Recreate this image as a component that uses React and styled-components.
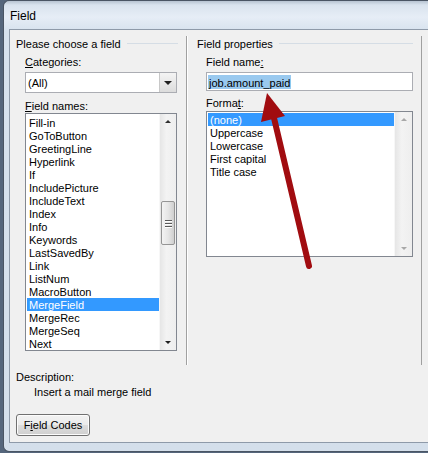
import styled, { createGlobalStyle } from 'styled-components';

const GlobalStyle = createGlobalStyle`
  html, body {
    margin: 0;
    padding: 0;
    background: #55667c;
    font-family: "Liberation Sans", Arial, sans-serif;
  }
  * { box-sizing: border-box; }
`;

const fieldNames = [
  'Fill-in', 'GoToButton', 'GreetingLine', 'Hyperlink', 'If', 'IncludePicture',
  'IncludeText', 'Index', 'Info', 'Keywords', 'LastSavedBy', 'Link', 'ListNum',
  'MacroButton', 'MergeField', 'MergeRec', 'MergeSeq', 'Next',
];

const formats = ['(none)', 'Uppercase', 'Lowercase', 'First capital', 'Title case'];

export default function App() {
  return (
    <>
      <GlobalStyle />
      <Stage>
        <Window>
          <TitleBar>Field</TitleBar>
          <Client>
            <Columns>
              <LeftPane>
                <GroupTitle><span>Please choose a field</span></GroupTitle>
                <Label><u>C</u>ategories:</Label>
                <Combo>
                  <ComboValue>(All)</ComboValue>
                  <ComboButton><DownArrow /></ComboButton>
                </Combo>
                <Label $gap={6}><u>F</u>ield names:</Label>
                <ListBox $height={238} $padTop={2}>
                  <Items>
                    {fieldNames.map((n) => (
                      <Item key={n} $selected={n === 'MergeField'}>{n}</Item>
                    ))}
                  </Items>
                  <ScrollBar>
                    <UpArrow />
                    <Track>
                      <Thumb $top={73}>
                        <Grip /><Grip /><Grip />
                      </Thumb>
                    </Track>
                    <DownArrow $small />
                  </ScrollBar>
                </ListBox>
              </LeftPane>
              <RightPane>
                <GroupTitle><span>Field properties</span></GroupTitle>
                <Indent>
                  <Label>Field name<u>:</u></Label>
                  <TextInput>
                    <Selection>job.amount_paid</Selection>
                  </TextInput>
                  <Label $gap={5}>Forma<u>t</u>:</Label>
                  <ListBox $height={146} $padTop={1} $gap={2}>
                    <Items>
                      {formats.map((f) => (
                        <Item key={f} $selected={f === '(none)'}>{f}</Item>
                      ))}
                    </Items>
                    <ScrollBar $wide>
                      <UpArrow $faded />
                      <Track />
                      <DownArrow $small $faded />
                    </ScrollBar>
                  </ListBox>
                </Indent>
              </RightPane>
            </Columns>
            <Description>
              <div>Description:</div>
              <DescText>Insert a mail merge field</DescText>
            </Description>
            <Button>F<u>i</u>eld Codes</Button>
          </Client>
        </Window>
        <Overlay width="428" height="453" viewBox="0 0 428 453">
          <line x1="309" y1="266" x2="274" y2="118" stroke="#a10c10" strokeWidth="6" strokeLinecap="round" />
          <polygon points="267,93 261,122 285,116" fill="#a10c10" />
        </Overlay>
      </Stage>
    </>
  );
}

const Stage = styled.div`
  position: relative;
  width: 428px;
  height: 453px;
  overflow: hidden;
`;

const Window = styled.div`
  margin-left: 3px;
  width: 440px;
  height: 452px;
  border: 1px solid #4a5564;
  border-right: none;
  border-radius: 6px 0 0 6px;
  background: linear-gradient(180deg, #b7c3d1 0px, #d9e3ee 4px, #e6edf6 16px, #d7e2ee 30px, #d4dfeb 100%);
  display: flex;
  flex-direction: column;
`;

const TitleBar = styled.div`
  height: 28px;
  padding: 8px 0 0 6px;
  font-size: 12px;
  color: #000;
`;

const Client = styled.div`
  margin-left: 5px;
  height: 414px;
  border: 1px solid #8e9aa9;
  border-right: none;
  background: #f0f0f0;
  padding: 6px 0 0 6px;
  font-size: 11px;
  color: #000;
`;

const Columns = styled.div`
  display: flex;
  height: 329px;
`;

const LeftPane = styled.div`
  width: 170px;
  display: flex;
  flex-direction: column;
`;

const RightPane = styled.div`
  width: 236px;
  border-left: 1px solid #a0a0a0;
  border-right: 1px solid #a0a0a0;
  box-shadow: inset 1px 0 0 #ffffff;
  padding-left: 10px;
  display: flex;
  flex-direction: column;
`;

const GroupTitle = styled.div`
  display: flex;
  align-items: center;
  height: 14px;
  padding-right: 8px;
  white-space: nowrap;
  & > span {
    line-height: 13px;
    padding-top: 2px;
  }
  &::after {
    content: '';
    flex: 1;
    height: 1px;
    margin-left: 6px;
    background: #d5dde5;
  }
`;

const Indent = styled.div`
  padding-left: 9px;
  padding-right: 8px;
  display: flex;
  flex-direction: column;
`;

const Label = styled.div`
  margin-top: ${(p) => p.$gap ?? 5}px;
  height: 13px;
  line-height: 15px;
  ${LeftPane} > & { margin-left: 9px; }
`;

const Combo = styled.div`
  margin: 4px 9px 0 9px;
  height: 21px;
  border: 1px solid #abadb3;
  background: #fff;
  display: flex;
`;

const ComboValue = styled.div`
  flex: 1;
  padding: 4px 0 0 2px;
`;

const ComboButton = styled.div`
  width: 17px;
  border-left: 1px solid #c8c8c8;
  background: linear-gradient(180deg, #f4f4f4, #dcdcdc);
  display: flex;
  align-items: center;
  justify-content: center;
`;

const DownArrow = styled.div`
  width: 0;
  height: 0;
  border-left: ${(p) => (p.$small ? 3 : 4)}px solid transparent;
  border-right: ${(p) => (p.$small ? 3 : 4)}px solid transparent;
  border-top: ${(p) => (p.$small ? 3 : 4)}px solid ${(p) => (p.$faded ? '#a8a8a8' : '#202020')};
  margin: ${(p) => (p.$small ? '5px auto 6px' : '0')};
`;

const UpArrow = styled.div`
  width: 0;
  height: 0;
  border-left: 3px solid transparent;
  border-right: 3px solid transparent;
  border-bottom: 3px solid ${(p) => (p.$faded ? '#a8a8a8' : '#303030')};
  margin: 6px auto 5px;
`;

const ListBox = styled.div`
  margin: ${(p) => p.$gap ?? 1}px ${(p) => (p.$gap ? 0 : 9)}px 0 ${(p) => (p.$gap ? 0 : 9)}px;
  height: ${(p) => p.$height}px;
  border: 1px solid #828790;
  background: #fff;
  display: flex;
  & > div:first-child { padding-top: ${(p) => p.$padTop}px; }
`;

const Items = styled.div`
  flex: 1;
  padding-left: 1px;
  overflow: hidden;
`;

const Item = styled.div`
  height: 13px;
  line-height: 15px;
  padding-left: 2px;
  white-space: nowrap;
  background: ${(p) => (p.$selected ? '#3399ff' : 'transparent')};
  color: ${(p) => (p.$selected ? '#fff' : '#000')};
`;

const ScrollBar = styled.div`
  width: ${(p) => (p.$wide ? 18 : 17)}px;
  background: linear-gradient(90deg, #e6e6e6, #f3f3f3 40%, #eeeeee);
  display: flex;
  flex-direction: column;
  border-left: 1px solid #f7f7f7;
`;

const Track = styled.div`
  flex: 1;
  position: relative;
`;

const Thumb = styled.div`
  position: absolute;
  top: ${(p) => p.$top}px;
  left: 1px;
  right: 1px;
  height: 44px;
  border: 1px solid #959595;
  border-radius: 2px;
  background: linear-gradient(90deg, #f3f3f3, #e6e6e6 50%, #cfcfcf);
  display: flex;
  flex-direction: column;
  align-items: center;
  justify-content: center;
  gap: 2px;
`;

const Grip = styled.div`
  width: 7px;
  height: 1px;
  background: #5a5a5a;
  box-shadow: 0 1px 0 #ffffff;
`;

const TextInput = styled.div`
  margin-top: 4px;
  height: 19px;
  border: 1px solid #abadb3;
  background: #fff;
  padding: 2px 0 0 1px;
`;

const Selection = styled.span`
  display: inline-block;
  height: 14px;
  line-height: 16px;
  background: #99c9ef;
  padding: 0 1px;
`;

const Description = styled.div`
  margin-top: 6px;
  line-height: 13px;
`;

const DescText = styled.div`
  margin-top: 2px;
  padding-left: 18px;
`;

const Button = styled.div`
  margin-top: 15px;
  width: 74px;
  height: 22px;
  border: 1px solid #707070;
  border-radius: 3px;
  background: linear-gradient(180deg, #f2f2f2 0%, #ebebeb 49%, #dddddd 50%, #cfcfcf 100%);
  box-shadow: inset 0 0 0 1px #fcfcfc;
  display: flex;
  align-items: center;
  justify-content: center;
`;

const Overlay = styled.svg`
  position: absolute;
  top: 0;
  left: 0;
  pointer-events: none;
`;
